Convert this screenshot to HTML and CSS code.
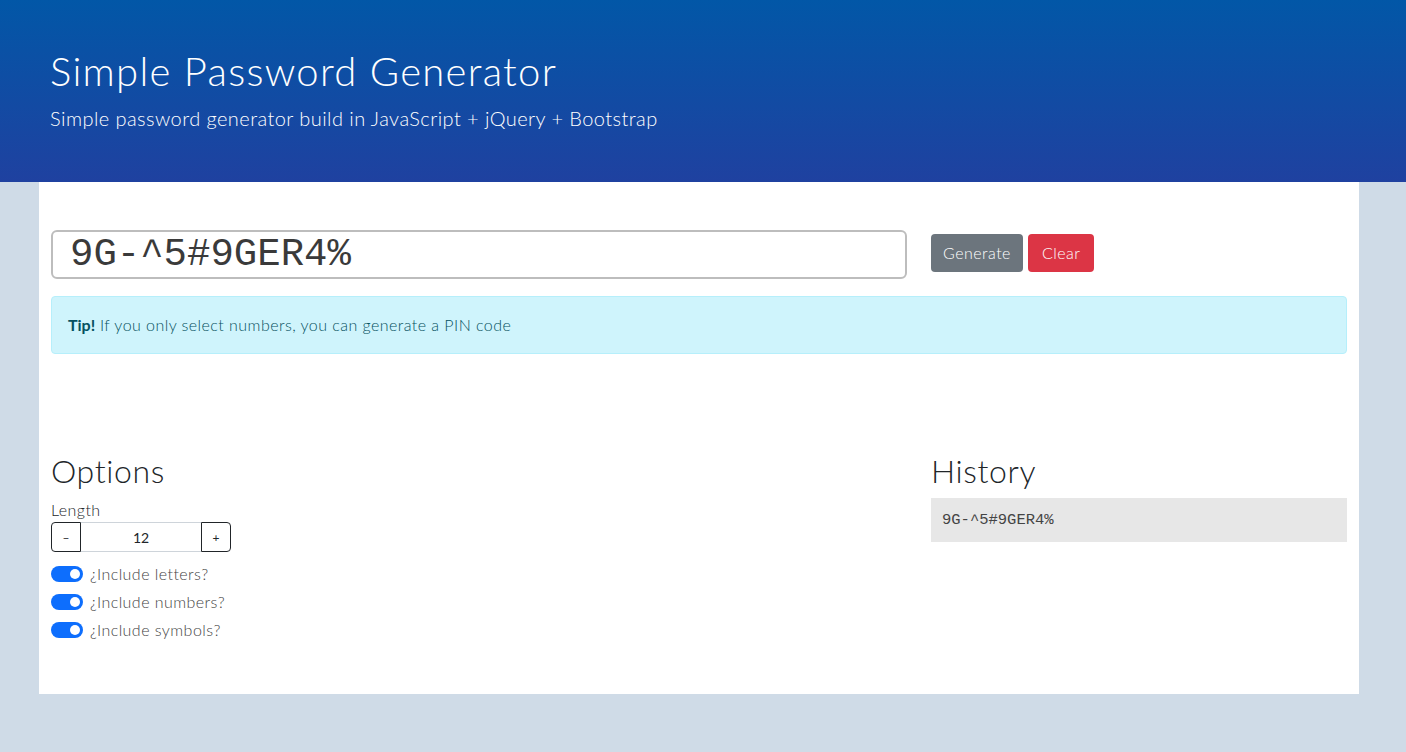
FILE: index.html
```html
<!DOCTYPE html>
<html lang="en">
<head>
<meta charset="utf-8">
<title>Simple Password Generator</title>
<link rel="stylesheet" href="styles.css">
</head>
<body>
<header class="hero">
  <h1 class="hero-title">Simple Password Generator</h1>
  <p class="hero-sub">Simple password generator build in JavaScript + jQuery + Bootstrap</p>
</header>
<main class="card">
  <div class="row-top">
    <div class="col-main">
      <input class="pw-input" type="text" value="9G-^5#9GER4%">
    </div>
    <div class="col-side actions">
      <button class="btn btn-gray">Generate</button>
      <button class="btn btn-red">Clear</button>
    </div>
  </div>
  <div class="alert"><strong>Tip!</strong> If you only select numbers, you can generate a PIN code</div>
  <div class="row-bottom">
    <section class="col-main">
      <h2 class="section-title">Options</h2>
      <div class="field-label">Length</div>
      <div class="stepper">
        <button class="step-btn">–</button>
        <input class="step-input" type="text" value="12">
        <button class="step-btn">+</button>
      </div>
      <div class="switches">
        <label class="switch-row"><span class="switch"></span>¿Include letters?</label>
        <label class="switch-row"><span class="switch"></span>¿Include numbers?</label>
        <label class="switch-row"><span class="switch"></span>¿Include symbols?</label>
      </div>
    </section>
    <section class="col-side">
      <h2 class="section-title">History</h2>
      <div class="history">9G-^5#9GER4%</div>
    </section>
  </div>
</main>
</body>
</html>
```

FILE: styles.css
```css
* { box-sizing: border-box; }
html, body { margin: 0; padding: 0; }
body {
  background: #cfdbe7;
  font-family: Lato, "Open Sans", sans-serif;
  font-weight: 300;
  color: #212529;
  font-size: 16px;
  line-height: 1.5;
  letter-spacing: 0.028em;
  min-height: 752px;
}
.hero {
  height: 182px;
  background: linear-gradient(180deg, #0257a7 0%, #1f41a0 100%);
  color: #fff;
  padding: 47px 50px 0;
}
.hero-title {
  margin: 0;
  font-size: 40px;
  font-weight: 300;
  line-height: 48px;
  letter-spacing: 0.032em;
}
.hero-sub {
  margin: 11px 0 0;
  font-size: 20px;
  line-height: 24px;
  font-weight: 300;
  letter-spacing: 0.022em;
}
.card {
  width: 1320px;
  margin: 0 auto 0 39px;
  background: #fff;
  padding: 48px 12px 52px;
}
.row-top {
  display: flex;
  gap: 24px;
  align-items: flex-start;
}
.col-main { width: 856px; flex: none; }
.col-side { width: 416px; flex: none; }
.pw-input {
  display: block;
  width: 856px;
  height: 49px;
  border: 2px solid #bdbdbd;
  border-radius: 6px;
  padding: 0 17px;
  font-family: "Liberation Mono", "Courier New", monospace;
  font-size: 39px;
  letter-spacing: 0;
  color: #3a3a3a;
  line-height: 45px;
  outline: none;
}
.actions { display: flex; gap: 5px; padding-top: 4px; }
.btn {
  font-family: inherit;
  font-weight: 300;
  font-size: 16px;
  letter-spacing: 0.03em;
  color: #fff;
  border: none;
  border-radius: 4px;
  height: 38px;
  padding: 0 12px;
  line-height: 38px;
}
.btn-gray { background: #6c757d; }
.btn-red { background: #dc3545; padding: 0 14px; }
.alert {
  margin-top: 17px;
  background: #cff4fc;
  border: 1px solid #b6effb;
  border-radius: 4px;
  color: #055160;
  padding: 16px 16px;
  line-height: 24px;
}
.alert strong { font-weight: 700; letter-spacing: 0; }
.row-bottom {
  display: flex;
  gap: 24px;
  margin-top: 98px;
  align-items: flex-start;
}
.section-title {
  margin: 0 0 8px;
  font-size: 32px;
  font-weight: 300;
  line-height: 38px;
  letter-spacing: 0.02em;
}
.field-label { line-height: 24px; }
.stepper { display: flex; width: 180px; height: 30px; }
.step-btn {
  width: 30px;
  height: 30px;
  background: #fff;
  border: 1px solid #212529;
  font-family: inherit;
  font-size: 12px;
  color: #212529;
  padding: 0;
}
.step-btn:first-child { border-radius: 4px 0 0 4px; }
.step-btn:last-child { border-radius: 0 4px 4px 0; }
.step-input {
  width: 120px;
  height: 30px;
  border: 1px solid #ced4da;
  border-left: none;
  border-right: none;
  text-align: center;
  font-family: inherit;
  font-weight: 400;
  font-size: 14px;
  color: #212529;
  padding: 0;
}
.switches { display: flex; flex-direction: column; gap: 4px; margin-top: 10px; }
.switch-row { display: flex; align-items: center; gap: 7px; line-height: 24px; color: #444; }
.switch {
  width: 32px;
  height: 16px;
  border-radius: 8px;
  background: #0d6efd;
  position: relative;
  flex: none;
}
.switch::after {
  content: "";
  position: absolute;
  right: 3px;
  top: 3px;
  width: 10px;
  height: 10px;
  border-radius: 50%;
  background: #fff;
}
.history {
  background: #e7e7e7;
  height: 44px;
  padding: 0 11px;
  line-height: 44px;
  font-family: "Liberation Mono", "Courier New", monospace;
  font-size: 15.5px;
  letter-spacing: 0;
  color: #444;
  font-weight: 400;
}
```
